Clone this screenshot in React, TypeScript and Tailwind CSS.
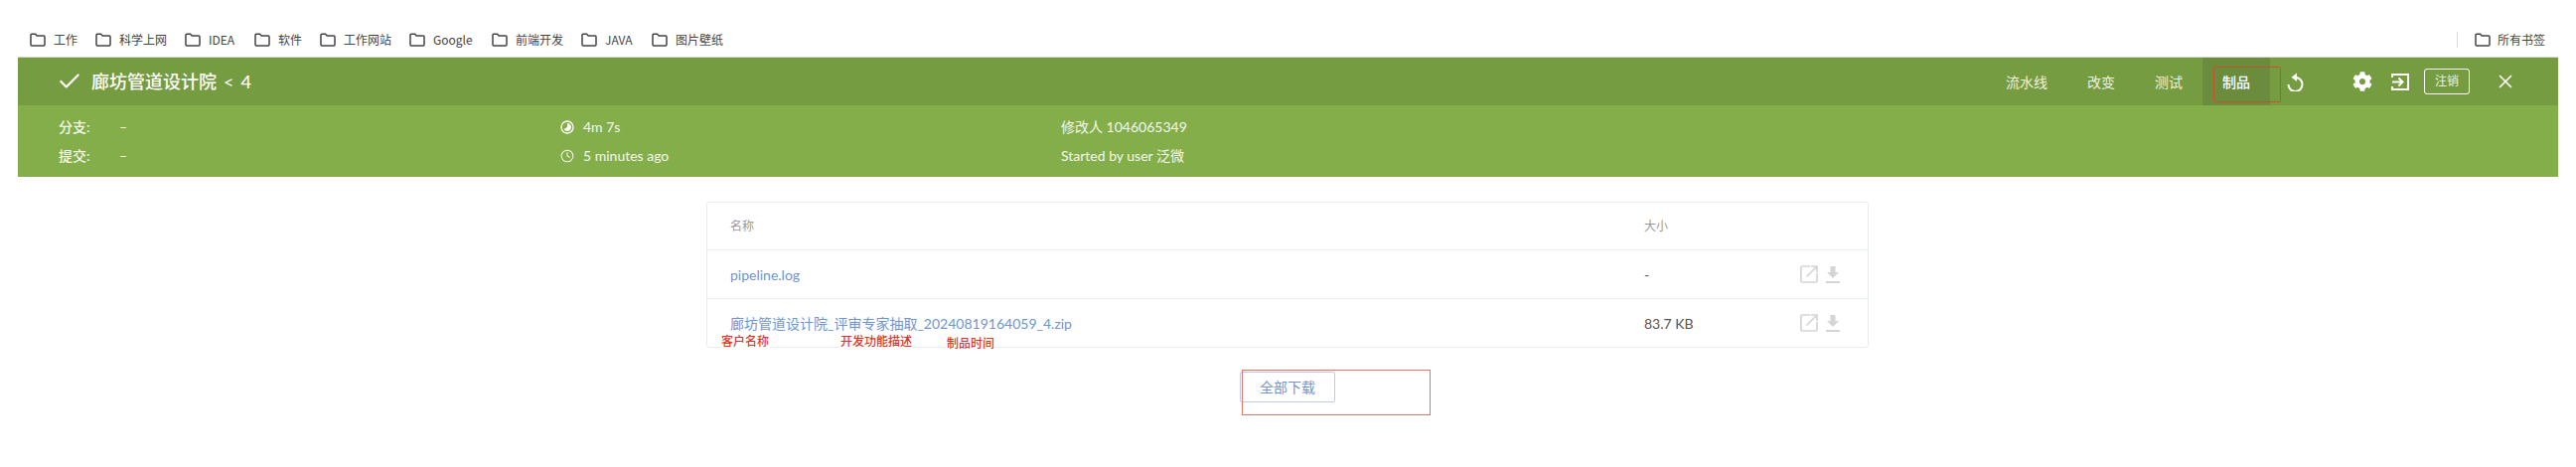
import { Check, Clock, X } from "lucide-react"
import { FaCog } from "react-icons/fa"

const bookmarks = [
  { label: "工作", width: "w-[66px]" },
  { label: "科学上网", width: "w-[90px]" },
  { label: "IDEA", width: "w-[70px]" },
  { label: "软件", width: "w-[66px]" },
  { label: "工作网站", width: "w-[90px]" },
  { label: "Google", width: "w-[83px]" },
  { label: "前端开发", width: "w-[90px]" },
  { label: "JAVA", width: "w-[71px]" },
  { label: "图片壁纸", width: "w-[90px]" },
]

const tabs = ["流水线", "改变", "测试", "制品"]

const files = [
  { name: "pipeline.log", size: "-" },
  { name: "廊坊管道设计院_评审专家抽取_20240819164059_4.zip", size: "83.7 KB" },
]

const notes = [
  { label: "客户名称", className: "left-[14px] top-[131px]" },
  { label: "开发功能描述", className: "left-[134px] top-[131px]" },
  { label: "制品时间", className: "left-[241px] top-[133px]" },
]

function FolderIcon() {
  return (
    <svg viewBox="0 0 16 14" className="h-[14px] w-[16px] shrink-0" fill="none" stroke="#444" strokeWidth="1.5">
      <path d="M1 2.2c0-.6.4-1 1-1h3.6l1.6 1.9H14c.6 0 1 .4 1 1V12c0 .6-.4 1-1 1H2c-.6 0-1-.4-1-1V2.2Z" />
    </svg>
  )
}

function DurationIcon() {
  return (
    <svg viewBox="0 0 14 14" className="h-[14px] w-[14px] shrink-0">
      <circle cx="7" cy="7" r="6" fill="none" stroke="white" strokeWidth="1.3" />
      <path d="M7 3a4 4 0 1 1-3.4 6.1L7 7V3Z" fill="white" />
    </svg>
  )
}

function ReplayIcon() {
  return (
    <svg viewBox="0 0 17 19" className="h-[19px] w-[17px]" fill="none" stroke="white" strokeWidth="2">
      <path d="M8.5 5a7 7 0 1 1-7 7" />
      <path d="M10 0.5v8.5L4.5 4.8 10 0.5Z" fill="white" stroke="none" />
    </svg>
  )
}

function EnterIcon() {
  return (
    <svg viewBox="0 0 18 19" className="h-[19px] w-[18px]" fill="none" stroke="white" strokeWidth="2">
      <path d="M1 5V2h16v15H1v-3" />
      <path d="M1 9.5h10M7.5 5.5l4 4-4 4" />
    </svg>
  )
}

function OpenIcon() {
  return (
    <svg viewBox="0 0 18 18" className="h-[18px] w-[18px]" fill="none" stroke="#d5d5d5" strokeWidth="1.7">
      <path d="M10 1H1.8c-.5 0-.9.4-.9.9v14.2c0 .5.4.9.9.9h14.3c.5 0 .9-.4.9-.9V8" />
      <path d="M6.5 11.5 16.5 1.5M11 1h6v6" />
    </svg>
  )
}

function DownloadIcon() {
  return (
    <svg viewBox="0 0 14 17" className="h-[17px] w-[14px]" fill="#d5d5d5">
      <path d="M4.5 0h5v6H13L7 12 1 6h3.5V0Z" />
      <rect x="0" y="15" width="14" height="2" />
    </svg>
  )
}

export default function App() {
  return (
    <div className="relative h-[470px] w-[2593px] overflow-hidden bg-white font-['Lato','Noto_Sans_CJK_SC',sans-serif]">
      <div className="flex h-[57px] items-center pl-[30px] pr-[31px] pt-[23px] font-['Noto_Sans_CJK_SC',sans-serif] text-[12px] text-[#444]">
        {bookmarks.map((b) => (
          <div key={b.label} className={`flex items-center gap-[8px] ${b.width}`}>
            <FolderIcon />
            <span>{b.label}</span>
          </div>
        ))}
        <div className="ml-auto flex items-center">
          <div className="mr-[17px] h-[16px] w-px bg-[#d3e0f0]" />
          <div className="flex items-center gap-[7px]">
            <FolderIcon />
            <span>所有书签</span>
          </div>
        </div>
      </div>

      <div className="mx-[18px] text-white">
        <div className="flex h-[49px] items-center border-t border-[#d8dcd0] bg-[#769c42] pl-[41px] pr-[42px]">
          <Check size={26} strokeWidth={2} className="-ml-[2px] mr-[9px]" />
          <div className="flex gap-[7px] text-[18px] font-medium">
            <span>廊坊管道设计院</span>
            <span className="font-normal">&lt;</span>
            <span>4</span>
          </div>
          <div className="ml-auto flex h-full items-center">
            {tabs.map((t) => (
              <div
                key={t}
                className={`flex h-full items-center px-[20px] text-[14px] ${
                  t === "制品" ? "bg-[#6a8c3c] font-medium" : "text-white/85"
                }`}
              >
                {t}
              </div>
            ))}
            <div className="ml-[17px]">
              <ReplayIcon />
            </div>
            <FaCog size={20} className="ml-[49px]" />
            <div className="ml-[19px]">
              <EnterIcon />
            </div>
            <div className="ml-[15px] flex h-[26px] w-[46px] items-center justify-center rounded-[3px] border border-white text-[12px] text-white/85">
              注销
            </div>
            <X size={22} strokeWidth={1.8} className="ml-[25px]" />
          </div>
        </div>
        <div className="grid h-[72px] grid-cols-[505px_504px_auto] content-center gap-y-[11px] bg-[#84ae4a] pl-[41px] text-[14px] leading-[18px] text-white/90">
          <div className="flex">
            <span className="w-[61px] font-medium">分支:</span>
            <span>–</span>
          </div>
          <div className="flex items-center gap-[9px]">
            <DurationIcon />
            <span>4m 7s</span>
          </div>
          <div>修改人 1046065349</div>
          <div className="flex">
            <span className="w-[61px] font-medium">提交:</span>
            <span>–</span>
          </div>
          <div className="flex items-center gap-[9px]">
            <Clock size={14} strokeWidth={1.8} />
            <span>5 minutes ago</span>
          </div>
          <div>Started by user 泛微</div>
        </div>
      </div>

      <div className="relative ml-[711px] mt-[25px] w-[1170px]">
        <div className="rounded-[3px] border border-[#e8edf0] text-[14px]">
          <div className="grid h-[47px] grid-cols-[920px_1fr] items-center pl-[23px] text-[12px] text-[#999]">
            <span>名称</span>
            <span>大小</span>
          </div>
          {files.map((f) => (
            <div
              key={f.name}
              className="grid h-[49px] grid-cols-[920px_157px_1fr] items-center border-t border-[#e8edf0] pl-[23px]"
            >
              <span className="text-[#6d95d2]">{f.name}</span>
              <span className="text-[#555]">{f.size}</span>
              <div className="flex items-center gap-[8px]">
                <OpenIcon />
                <DownloadIcon />
              </div>
            </div>
          ))}
        </div>
        {notes.map((n) => (
          <span
            key={n.label}
            className={`absolute bg-white px-[1px] font-['Noto_Sans_CJK_SC',sans-serif] text-[12px] font-medium leading-[18px] text-[#e0352b] ${n.className}`}
          >
            {n.label}
          </span>
        ))}
      </div>

      <div className="relative ml-[1248px] mt-[24px] flex h-[31px] w-[96px] items-center justify-center rounded-[2px] border border-[#b9cce8] text-[14px] text-[#6d95d2]">
        全部下载
        <div className="absolute -top-[3px] left-[1px] h-[46px] w-[190px] border border-[#e4736b]" />
      </div>

      <div className="absolute left-[2228px] top-[67px] h-[36px] w-[68px] rounded-[2px] border border-[#c2552a]" />
    </div>
  )
}
